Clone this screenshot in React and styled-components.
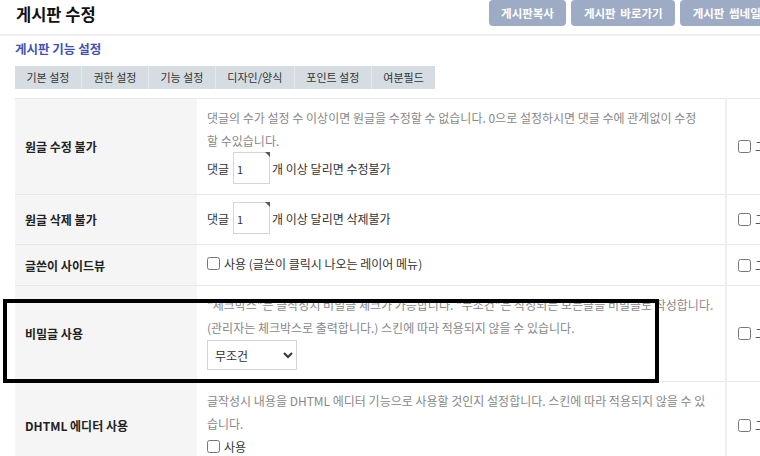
import React from "react";
import styled, { createGlobalStyle } from "styled-components";

const Global = createGlobalStyle`
  html, body { margin: 0; padding: 0; background: #fff; overflow: hidden; }
  body { font-family: "Noto Sans CJK KR", "Noto Sans", sans-serif; color: #333; }
  * { box-sizing: border-box; }
`;

const Page = styled.div`
  position: relative;
  width: 814px;
`;

const Header = styled.header`
  display: flex;
  align-items: flex-start;
  height: 36px;
  padding: 0 15px;
  border-bottom: 2px solid #eee;
`;

const Title = styled.h1`
  margin: 0;
  padding-left: 1px;
  font-size: 16.5px;
  line-height: 28px;
  font-weight: 700;
  color: #111;
`;

const Actions = styled.div`
  margin-left: auto;
  display: flex;
  gap: 5px;
`;

const ActionButton = styled.button`
  height: 26px;
  padding: 0 12.5px;
  border: 0;
  border-radius: 4px;
  background: #9eabc5;
  color: #fff;
  font-family: inherit;
  font-size: 11.5px;
  font-weight: 700;
  word-spacing: 2px;
  white-space: nowrap;
`;

const Section = styled.section`
  padding: 0 15px;
`;

const SubTitle = styled.h2`
  margin: 0 0 7px;
  padding-top: 3px;
  font-size: 12.5px;
  line-height: 20px;
  font-weight: 700;
  color: #3f51b5;
`;

const Tabs = styled.ul`
  display: flex;
  margin: 0 0 9px;
  padding: 0;
  list-style: none;
`;

const Tab = styled.li`
  height: 23px;
  padding: 0 11.5px;
  font-size: 11px;
  line-height: 23px;
  color: #333;
  background: #d6dde2;
  border-right: 1px solid #e6eaed;
  white-space: nowrap;
  &:last-child { border-right: 0; }
`;

const Table = styled.table`
  width: 790px;
  table-layout: fixed;
  border-collapse: collapse;
  border-top: 1px solid #e8e8e8;
`;

const Row = styled.tr`
  border-bottom: 1px solid #e8e8e8;
`;

const Label = styled.th`
  padding: 0 10px;
  background: #f5f5f5;
  text-align: left;
  font-size: 12px;
  font-weight: 700;
  color: #222;
  vertical-align: middle;
`;

const Cell = styled.td`
  padding: 7px 8px 10px 10px;
  font-size: 12px;
  color: #333;
  vertical-align: middle;
  overflow: hidden;
`;

const SideCell = styled.td`
  padding: 0 0 0 11px;
  border-left: 2px solid #eee;
  font-size: 12px;
  color: #333;
  vertical-align: middle;
  white-space: nowrap;
  overflow: hidden;
`;

const Desc = styled.p`
  margin: 0;
  font-size: 12px;
  line-height: 23px;
  color: #888;
  white-space: nowrap;
`;

const ControlRow = styled.div`
  display: flex;
  align-items: center;
  height: 32px;
`;

const CheckLine = styled.label`
  display: flex;
  align-items: center;
  height: 23px;
  color: #333;
`;

const Box = styled.input.attrs({ type: "checkbox" })`
  width: 13px;
  height: 13px;
  margin: 0 4px 0 0;
`;

const NumWrap = styled.span`
  position: relative;
  display: inline-block;
  margin: 0 2px 0 4px;
  &::after {
    content: "";
    position: absolute;
    top: 0;
    right: 0;
    border-top: 5px solid #5a5a5a;
    border-left: 5px solid transparent;
  }
`;

const NumInput = styled.input`
  display: block;
  width: 37px;
  height: 32px;
  padding: 2px 3px 0;
  border: 1px solid #d5d5d5;
  border-radius: 0;
  font-family: inherit;
  font-size: 11px;
  color: #333;
  outline: none;
`;

const Select = styled.select`
  width: 90px;
  height: 30px;
  padding: 0 3px;
  border: 1px solid #d5d5d5;
  border-radius: 0;
  background: #fff;
  font-family: inherit;
  font-size: 12px;
  color: #333;
`;

const Spacer = styled.span`
  margin-right: 8px;
`;

const Annotation = styled.div`
  position: absolute;
  left: 3px;
  top: 299px;
  width: 656px;
  height: 84px;
  border: 4px solid #000;
  pointer-events: none;
`;

function Side() {
  return (
    <SideCell>
      <CheckLine>
        <Box />
        <Spacer>그룹적용</Spacer>
        <Box />
        전체적용
      </CheckLine>
    </SideCell>
  );
}

function CountRow({ suffix }) {
  return (
    <ControlRow>
      댓글
      <NumWrap>
        <NumInput defaultValue="1" />
      </NumWrap>
      {suffix}
    </ControlRow>
  );
}

export default function App() {
  return (
    <Page>
      <Global />
      <Header>
        <Title>게시판 수정</Title>
        <Actions>
          <ActionButton>게시판복사</ActionButton>
          <ActionButton>게시판 바로가기</ActionButton>
          <ActionButton>게시판 썸네일 삭제</ActionButton>
        </Actions>
      </Header>
      <Section>
        <SubTitle>게시판 기능 설정</SubTitle>
        <Tabs>
          {["기본 설정", "권한 설정", "기능 설정", "디자인/양식", "포인트 설정", "여분필드"].map((t) => (
            <Tab key={t}>{t}</Tab>
          ))}
        </Tabs>
        <Table>
          <colgroup>
            <col style={{ width: 182 }} />
            <col style={{ width: 529 }} />
            <col style={{ width: 79 }} />
          </colgroup>
          <tbody>
            <Row>
              <Label>원글 수정 불가</Label>
              <Cell>
                <Desc>
                  댓글의 수가 설정 수 이상이면 원글을 수정할 수 없습니다. 0으로 설정하시면 댓글 수에 관계없이 수정
                  <br />할 수있습니다.
                </Desc>
                <CountRow suffix="개 이상 달리면 수정불가" />
              </Cell>
              <Side />
            </Row>
            <Row>
              <Label>원글 삭제 불가</Label>
              <Cell>
                <CountRow suffix="개 이상 달리면 삭제불가" />
              </Cell>
              <Side />
            </Row>
            <Row>
              <Label>글쓴이 사이드뷰</Label>
              <Cell>
                <CheckLine>
                  <Box />
                  사용 (글쓴이 클릭시 나오는 레이어 메뉴)
                </CheckLine>
              </Cell>
              <Side />
            </Row>
            <Row>
              <Label>비밀글 사용</Label>
              <Cell>
                <Desc>
                  "체크박스"는 글작성시 비밀글 체크가 가능합니다. "무조건"은 작성되는 모든글을 비밀글로 작성합니다.
                  <br />
                  (관리자는 체크박스로 출력합니다.) 스킨에 따라 적용되지 않을 수 있습니다.
                </Desc>
                <ControlRow>
                  <Select defaultValue="2">
                    <option value="0">사용하지 않음</option>
                    <option value="1">체크박스</option>
                    <option value="2">무조건</option>
                  </Select>
                </ControlRow>
              </Cell>
              <Side />
            </Row>
            <Row>
              <Label>DHTML 에디터 사용</Label>
              <Cell>
                <Desc>
                  글작성시 내용을 DHTML 에디터 기능으로 사용할 것인지 설정합니다. 스킨에 따라 적용되지 않을 수 있
                  <br />
                  습니다.
                </Desc>
                <CheckLine>
                  <Box />
                  사용
                </CheckLine>
              </Cell>
              <Side />
            </Row>
          </tbody>
        </Table>
      </Section>
      <Annotation />
    </Page>
  );
}
